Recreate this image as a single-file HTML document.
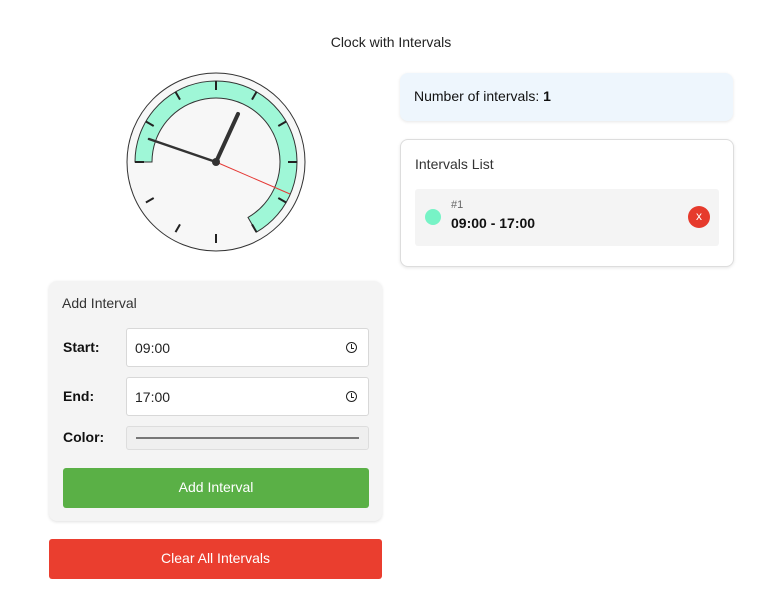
<!DOCTYPE html>
<html><head><meta charset="utf-8"><style>
body{margin:0;width:766px;height:611px;background:#fff;font-family:"Liberation Sans",Arial,sans-serif;color:#222;position:relative}
.t{position:absolute;top:34px;left:0;width:782px;text-align:center;font-size:14px}
.card{position:absolute;border-radius:8px}
.lbl{position:absolute;font-size:14px;font-weight:bold;color:#111}
.inp{position:absolute;left:126px;width:243px;height:39px;background:#fff;border:1px solid #d8d8d8;border-radius:3px;box-sizing:border-box;font-size:14px;padding:11px 0 0 8px}
.ic{position:absolute;right:11px;top:13px;width:9px;height:9px;border:1.5px solid #222;border-radius:50%}
.ic:after{content:"";position:absolute;left:4px;top:1px;width:2px;height:4px;border-left:1.3px solid #222;border-bottom:1.3px solid #222}
</style></head><body>
<div class="t">Clock with Intervals</div>
<svg style="position:absolute;left:0;top:0" width="400" height="270">
<circle cx="216" cy="162" r="89" fill="#f7f7f7" stroke="#333" stroke-width="1"/>
<path d="M135,162 A81,81 0 1 1 256.5,232.1 L248,217.4 A64,64 0 1 0 152,162 Z" fill="#9ff7d7" stroke="#333" stroke-width="1"/>
<g stroke="#222" stroke-width="2">
<line x1="216" y1="81" x2="216" y2="90"/><line x1="216" y1="243" x2="216" y2="234"/>
<line x1="135" y1="162" x2="144" y2="162"/><line x1="297" y1="162" x2="288" y2="162"/>
<line x1="256.5" y1="91.9" x2="252" y2="99.6"/><line x1="286.1" y1="121.5" x2="278.3" y2="126"/>
<line x1="286.1" y1="202.5" x2="278.3" y2="198"/><line x1="256.5" y1="232.1" x2="252" y2="224.4"/>
<line x1="175.5" y1="232.1" x2="180" y2="224.4"/><line x1="145.9" y1="202.5" x2="153.7" y2="198"/>
<line x1="145.9" y1="121.5" x2="153.7" y2="126"/><line x1="175.5" y1="91.9" x2="180" y2="99.6"/>
</g>
<line x1="216" y1="162" x2="149" y2="139" stroke="#333" stroke-width="2.5" stroke-linecap="round"/>
<line x1="216" y1="162" x2="238" y2="114" stroke="#333" stroke-width="4" stroke-linecap="round"/>
<line x1="216" y1="162" x2="290" y2="194" stroke="#e53935" stroke-width="1"/>
<circle cx="216" cy="162" r="4" fill="#333"/>
</svg>
<div class="card" style="left:49px;top:281px;width:333px;height:240px;background:#f4f4f4;box-shadow:0 1px 3px rgba(0,0,0,.12)">
<div style="position:absolute;left:13px;top:14px;font-size:14px;color:#333">Add Interval</div>
</div>
<div class="lbl" style="left:63px;top:339px">Start:</div>
<div class="inp" style="top:328px">09:00<span class="ic"></span></div>
<div class="lbl" style="left:63px;top:388px">End:</div>
<div class="inp" style="top:377px">17:00<span class="ic"></span></div>
<div class="lbl" style="left:63px;top:429px">Color:</div>
<div style="position:absolute;left:126px;top:426px;width:243px;height:24px;background:#efefef;border:1px solid #ddd;border-radius:3px;box-sizing:border-box"><div style="position:absolute;left:9px;right:9px;top:10px;height:2px;background:#777"></div></div>
<div style="position:absolute;left:63px;top:468px;width:306px;height:40px;background:#5ab046;border-radius:3px;color:#fff;font-size:14px;text-align:center;line-height:38px">Add Interval</div>
<div style="position:absolute;left:49px;top:539px;width:333px;height:40px;background:#ea3e2f;border-radius:3px;color:#fff;font-size:14px;text-align:center;line-height:38px">Clear All Intervals</div>
<div class="card" style="left:400px;top:73px;width:333px;height:48px;background:#eef6fd;box-shadow:0 1px 3px rgba(0,0,0,.1)">
<div style="position:absolute;left:14px;top:15px;font-size:14px;color:#111">Number of intervals: <b>1</b></div></div>
<div class="card" style="left:400px;top:139px;width:332px;height:126px;background:#fff;border:1px solid #ddd;box-shadow:0 1px 3px rgba(0,0,0,.1)">
<div style="position:absolute;left:14px;top:16px;font-size:14px;color:#333">Intervals List</div>
<div style="position:absolute;left:14px;top:49px;width:304px;height:57px;background:#f4f4f4;border-radius:3px">
<div style="position:absolute;left:10px;top:20px;width:16px;height:16px;border-radius:50%;background:#77f3c6"></div>
<div style="position:absolute;left:36px;top:10px;font-size:11px;color:#666">#1</div>
<div style="position:absolute;left:36px;top:26px;font-size:14px;font-weight:bold;color:#111">09:00 - 17:00</div>
<div style="position:absolute;left:273px;top:17px;width:22px;height:22px;border-radius:50%;background:#e63a2c;color:#fff;font-size:12px;text-align:center;line-height:21px">x</div>
</div></div>
</body></html>
